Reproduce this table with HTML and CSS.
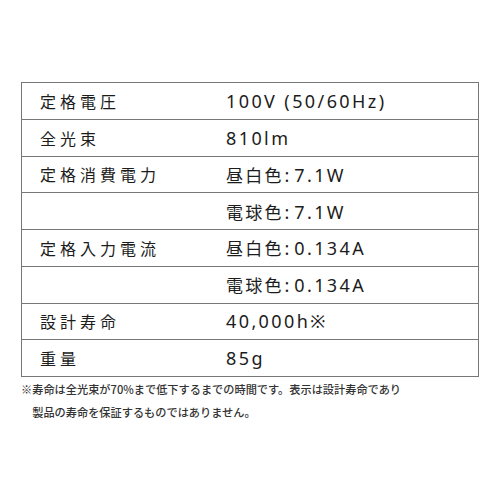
FILE: index.html
```html
<!DOCTYPE html>
<html lang="ja">
<head>
<meta charset="utf-8">
<link rel="stylesheet" href="styles.css">
</head>
<body>
<div class="page">
  <div class="spec">
    <div class="row"><div class="label">定格電圧</div><div class="value">100V (50/60Hz)</div></div>
    <div class="row"><div class="label">全光束</div><div class="value">810lm</div></div>
    <div class="row"><div class="label">定格消費電力</div><div class="value"><span class="ja">昼白色</span><span class="colon">:</span>7.1W</div></div>
    <div class="row"><div class="label"></div><div class="value"><span class="ja">電球色</span><span class="colon">:</span>7.1W</div></div>
    <div class="row"><div class="label">定格入力電流</div><div class="value"><span class="ja">昼白色</span><span class="colon">:</span>0.134A</div></div>
    <div class="row"><div class="label"></div><div class="value"><span class="ja">電球色</span><span class="colon">:</span>0.134A</div></div>
    <div class="row"><div class="label">設計寿命</div><div class="value">40,000h※</div></div>
    <div class="row"><div class="label">重量</div><div class="value">85g</div></div>
  </div>
  <p class="note">※寿命は全光束が70%まで低下するまでの時間です。表示は設計寿命であり<br>製品の寿命を保証するものではありません。</p>
</div>
</body>
</html>
```
FILE: styles.css
```css
html, body {
  margin: 0;
  padding: 0;
  background: #fff;
}
body {
  font-family: "Noto Sans", "Noto Sans CJK JP", sans-serif;
  color: #1c1c1c;
}
.page {
  padding: 82px 0 0 21px;
  width: 458px;
}
.spec {
  border: 1px solid #777;
}
.row {
  display: flex;
  align-items: center;
  height: 35.75px;
  border-bottom: 1px solid #777;
}
.row:last-child {
  border-bottom: none;
}
.label {
  box-sizing: border-box;
  flex: 0 0 185px;
  padding-left: 18px;
  font-size: 16px;
  letter-spacing: 4px;
  white-space: nowrap;
}
.value {
  padding-left: 19px;
  font-size: 18px;
  letter-spacing: 2.4px;
  white-space: nowrap;
}
.ja {
  font-size: 17px;
  letter-spacing: 2.3px;
}
.colon {
  letter-spacing: 0;
  padding: 0 5px 0 0.5px;
}
.note {
  margin: 1px 0 0 0;
  font-family: "Noto Sans CJK JP", sans-serif;
  font-weight: 500;
  font-size: 11.2px;
  line-height: 23px;
  color: #333;
  padding-left: 1em;
  text-indent: -1em;
}
```
